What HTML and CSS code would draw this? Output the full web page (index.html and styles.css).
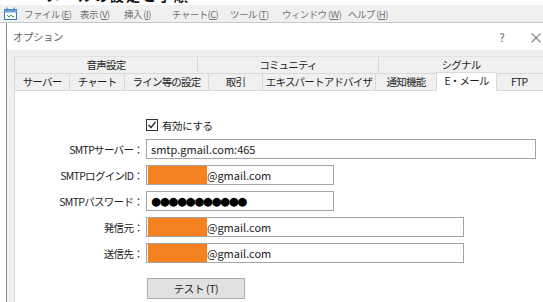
FILE: index.html
```html
<!DOCTYPE html>
<html lang="ja">
<head>
    <meta charset="UTF-8">
    <meta name="viewport" content="width=device-width, initial-scale=1.0">
    <title>オプション</title>
    <link rel="stylesheet" href="styles.css">
</head>
<body>
    <div class="cutline"><span>メールの設定と手順</span></div>

    <div class="menubar">
        <svg class="app-icon" width="15" height="14" viewBox="0 0 15 14">
            <rect x="1.5" y="2.5" width="12" height="10" fill="#fff" stroke="#3d7ab8"/>
            <rect x="1.5" y="2.5" width="12" height="3" fill="#6aa0d8"/>
            <path d="M4 0.5v3M11 0.5v3" stroke="#3d7ab8"/>
            <path d="M4 8l2 2 2-2 2 2 1-1" fill="none" stroke="#2e9e4f"/>
        </svg>
        <span class="menu-item">ファイル (<u>E</u>)</span>
        <span class="menu-item">表示 (<u>V</u>)</span>
        <span class="menu-item">挿入 (<u>I</u>)</span>
        <span class="menu-item">チャート(<u>C</u>)</span>
        <span class="menu-item">ツール (<u>T</u>)</span>
        <span class="menu-item">ウィンドウ (<u>W</u>)</span>
        <span class="menu-item">ヘルプ (<u>H</u>)</span>
    </div>

    <div class="dialog">
        <div class="titlebar">
            <span class="title">オプション</span>
            <span class="help">?</span>
            <span class="close">&times;</span>
        </div>

        <div class="dialog-body">
            <div class="tab-row top">
                <div class="tab" style="width: 183px">音声設定</div>
                <div class="tab" style="width: 181px">コミュニティ</div>
                <div class="tab grow">シグナル</div>
            </div>
            <div class="tab-row">
                <div class="tab" style="width: 55px">サーバー</div>
                <div class="tab" style="width: 55px">チャート</div>
                <div class="tab" style="width: 84px">ライン等の設定</div>
                <div class="tab" style="width: 54px">取引</div>
                <div class="tab" style="width: 113px">エキスパートアドバイザ</div>
                <div class="tab" style="width: 61px">通知機能</div>
                <div class="tab active" style="width: 60px">E・メール</div>
                <div class="tab grow">FTP</div>
            </div>

            <div class="panel">
                <div class="form">
                    <div></div>
                    <label class="check">
                        <span class="box">
                            <svg width="10" height="10" viewBox="0 0 10 10"><path d="M1.5 5l2.5 2.5 4.5-5.5" fill="none" stroke="#222" stroke-width="1.2"/></svg>
                        </span>
                        有効にする
                    </label>

                    <div class="label">SMTPサーバー：</div>
                    <div class="field wide">smtp.gmail.com:465</div>

                    <div class="label">SMTPログインID：</div>
                    <div class="field short"><span class="mask"></span>@gmail.com</div>

                    <div class="label">SMTPパスワード：</div>
                    <div class="field short dots">●●●●●●●●●●●</div>

                    <div class="label">発信元：</div>
                    <div class="field mid"><span class="mask"></span>@gmail.com</div>

                    <div class="label">送信先：</div>
                    <div class="field mid"><span class="mask"></span>@gmail.com</div>

                    <div></div>
                    <button class="test-btn">テスト (T)</button>
                </div>
            </div>
        </div>
    </div>
</body>
</html>
```

FILE: styles.css
```css
body {
    margin: 0;
    width: 543px;
    height: 302px;
    overflow: hidden;
    background-color: #fff;
    font-family: "Noto Sans CJK JP", "Noto Sans", sans-serif;
    font-size: 11px;
    color: #1e1e1e;
}

/* cut off text at the very top */
.cutline {
    height: 5px;
    overflow: hidden;
    padding-left: 46px;
}

.cutline span {
    display: block;
    line-height: 16px;
    margin-top: -13px;
    font-size: 14px;
    font-weight: bold;
    color: #111;
    letter-spacing: 2px;
    white-space: nowrap;
}

.menubar {
    height: 17px;
    display: flex;
    align-items: center;
    padding-left: 3px;
    background-color: #f0f0f0;
    border-bottom: 1px solid #c8c8c8;
    color: #707070;
    font-size: 9.5px;
    white-space: nowrap;
}

.app-icon {
    margin-right: 6px;
}

.menu-item {
    letter-spacing: -0.6px;
}

.menu-item:nth-of-type(1) { width: 56px; }
.menu-item:nth-of-type(2) { width: 44px; }
.menu-item:nth-of-type(3) { width: 48px; }
.menu-item:nth-of-type(4) { width: 58px; }
.menu-item:nth-of-type(5) { width: 52px; }
.menu-item:nth-of-type(6) { width: 66px; }

/* Dialog */
.dialog {
    margin-left: 6px;
    border-left: 1px solid #8a8a8a;
}

.titlebar {
    height: 27px;
    display: flex;
    align-items: center;
    padding-left: 6px;
    color: #666;
    font-size: 10.5px;
    letter-spacing: -0.5px;
}

.title {
    flex: 1;
}

.help {
    width: 29px;
    font-size: 11px;
}

.close {
    font-size: 15px;
    color: #777;
}

.dialog-body {
    background-color: #f0f0f0;
    padding: 6px 0 0 7px;
}

.tab-row {
    display: flex;
    height: 17px;
}

.tab {
    box-sizing: border-box;
    border: 1px solid #d9d9d9;
    border-right: none;
    border-bottom: none;
    text-align: center;
    line-height: 16px;
    font-size: 10.5px;
    letter-spacing: -0.8px;
    white-space: nowrap;
    color: #1e1e1e;
}

.tab-row.top .tab {
    border-top: 1px solid #e3e3e3;
}

.tab.grow {
    flex: 1;
    text-align: left;
    padding-left: 14px;
}

.tab-row.top .tab.grow {
    text-align: center;
    padding-left: 0;
}

.tab.active {
    background-color: #fff;
    margin-top: -1px;
    height: 19px;
    position: relative;
    z-index: 1;
}

.panel {
    background-color: #fff;
    border-left: 1px solid #d9d9d9;
    border-top: 1px solid #d9d9d9;
    height: 220px;
    padding-top: 28px;
    box-sizing: border-box;
}

.form {
    display: grid;
    grid-template-columns: 128px auto;
    column-gap: 3px;
    row-gap: 6px;
    align-items: center;
    justify-items: start;
}

.label {
    justify-self: end;
    color: #222;
    font-size: 10.5px;
    letter-spacing: -0.7px;
    white-space: nowrap;
}

.check {
    display: flex;
    align-items: center;
    gap: 4px;
    height: 12px;
    margin-bottom: 2px;
    font-size: 10.5px;
    letter-spacing: -0.4px;
}

.box {
    box-sizing: border-box;
    width: 12px;
    height: 12px;
    border: 1px solid #333;
    display: flex;
    align-items: center;
    justify-content: center;
}

.field {
    box-sizing: border-box;
    height: 20px;
    border: 1px solid #a5a5a5;
    display: flex;
    align-items: center;
    padding-left: 1px;
    color: #222;
}

.field.wide {
    width: 390px;
    padding-left: 4px;
}

.field.short {
    width: 188px;
}

.field.mid {
    width: 318px;
}

.field.dots {
    padding-left: 4px;
    font-family: "DejaVu Sans", sans-serif;
    font-size: 11.5px;
    letter-spacing: -1.4px;
    color: #000;
}

.mask {
    width: 59px;
    height: 18px;
    background-color: #f58220;
}

.test-btn {
    margin-top: 9px;
    margin-left: 1px;
    width: 98px;
    height: 21px;
    padding: 0;
    background-color: #e1e1e1;
    border: 1px solid #adadad;
    font-family: inherit;
    font-size: 10.5px;
    letter-spacing: -0.4px;
    color: #222;
}
```
